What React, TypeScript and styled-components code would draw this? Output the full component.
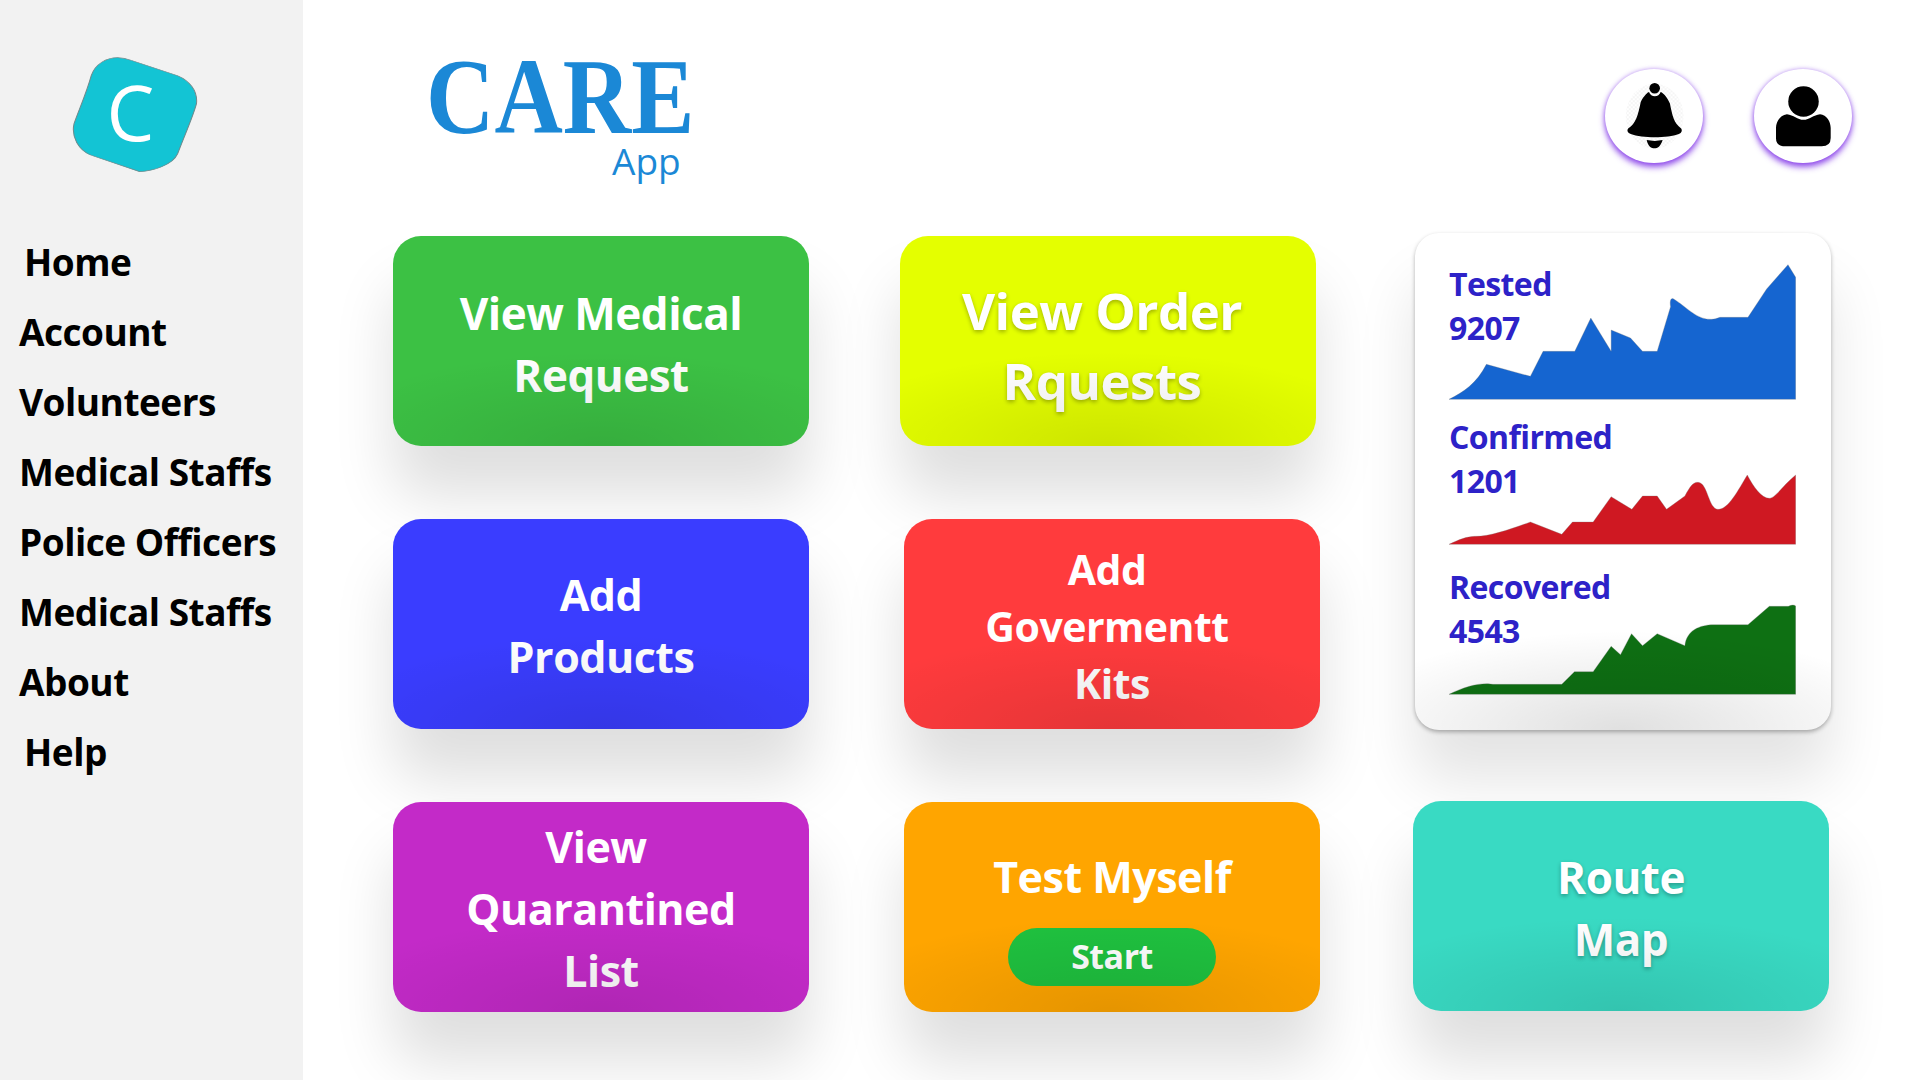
import React from 'react';
import styled, { createGlobalStyle } from 'styled-components';

const GlobalStyle = createGlobalStyle`
  html, body {
    margin: 0;
    padding: 0;
    background: #fff;
  }
  body {
    font-family: "Open Sans", "Noto Sans", sans-serif;
    overflow: hidden;
  }
`;

const Page = styled.div`
  display: flex;
  width: 1920px;
  height: 1080px;
  overflow: hidden;
`;

const Sidebar = styled.aside`
  flex: 0 0 303px;
  background: #f2f2f2;
  padding-top: 57px;
  box-sizing: border-box;
`;

const LogoMark = styled.div`
  display: grid;
  width: 127px;
  height: 116px;
  margin: 0 0 54px 71px;
  place-items: center;

  & > * {
    grid-area: 1 / 1;
  }
`;

const LogoLetter = styled.span`
  color: #fff;
  font-size: 76px;
  font-weight: 400;
  line-height: 1;
  margin: 0 8px 6px 0;
`;

const Nav = styled.nav`
  display: flex;
  flex-direction: column;
`;

const NavItem = styled.a<{ $indent?: boolean }>`
  height: 70px;
  line-height: 70px;
  padding-left: ${(p) => (p.$indent ? 24 : 19)}px;
  color: #000;
  font-size: 37px;
  font-weight: 700;
  letter-spacing: -0.5px;
  white-space: nowrap;
`;

const Main = styled.main`
  flex: 1;
  padding-left: 90px;
  min-width: 0;
`;

const Header = styled.header`
  display: flex;
  justify-content: space-between;
  height: 236px;
`;

const Brand = styled.div`
  margin-left: 33px;
  padding-top: 58px;
  color: #1b88d6;
`;

const BrandName = styled.div`
  font-family: "Liberation Serif", serif;
  font-size: 107px;
  font-weight: 700;
  line-height: 78px;
  transform: scaleX(0.885);
  transform-origin: left center;
  white-space: nowrap;
`;

const BrandSub = styled.div`
  margin-left: 186px;
  font-size: 37px;
  line-height: 50px;
`;

const HeaderActions = styled.div`
  display: flex;
  gap: 51px;
  padding: 69px 68px 0 0;
`;

const RoundButton = styled.div`
  display: flex;
  align-items: center;
  justify-content: center;
  width: 98px;
  height: 94px;
  border-radius: 50%;
  background: #fff;
  box-shadow: 0 4px 6px rgba(128, 50, 232, 0.85), 0 0 4px rgba(150, 90, 235, 0.5);
`;

const Board = styled.div`
  display: grid;
  grid-template-columns: repeat(3, 416px);
  grid-auto-rows: 210px;
  column-gap: 95px;
  row-gap: 73px;
`;

const Tile = styled.div<{
  $bg: string;
  $x?: number;
  $y?: number;
  $top?: number;
  $size?: number;
  $lh?: number;
  $glow?: boolean;
}>`
  position: relative;
  display: flex;
  flex-direction: column;
  align-items: center;
  justify-content: center;
  box-sizing: border-box;
  margin: ${(p) => p.$y ?? 0}px ${(p) => -(p.$x ?? 0)}px ${(p) => -(p.$y ?? 0)}px ${(p) => p.$x ?? 0}px;
  padding-top: ${(p) => p.$top ?? 0}px;
  border-radius: 28px;
  background: ${(p) => p.$bg};
  color: #fff;
  font-size: ${(p) => p.$size ?? 43}px;
  font-weight: 700;
  letter-spacing: -0.5px;
  line-height: ${(p) => p.$lh ?? 62}px;
  text-align: center;
  text-shadow: ${(p) => (p.$glow ? '0 2px 4px rgba(0, 0, 0, 0.3)' : 'none')};
  box-shadow: 0 50px 60px rgba(0, 0, 0, 0.13);

  &::after {
    content: '';
    position: absolute;
    inset: 0;
    border-radius: inherit;
    background: radial-gradient(ellipse 70% 45% at 50% 100%, rgba(0, 0, 0, 0.1), rgba(0, 0, 0, 0));
    pointer-events: none;
  }
`;

const Line = styled.span<{ $shift?: number }>`
  display: block;
  white-space: nowrap;
  margin-right: ${(p) => p.$shift ?? 0}px;
`;

const StartPill = styled.div`
  width: 208px;
  height: 58px;
  margin-top: 20px;
  border-radius: 29px;
  background: #1fc13f;
  font-size: 34px;
  line-height: 56px;
`;

const StatsCard = styled.div`
  position: relative;
  grid-row: span 2;
  height: 497px;
  margin-top: -3px;
  padding: 31px 34px 0;
  box-sizing: border-box;
  border-radius: 24px;
  background: #fff;
  box-shadow: 0 2px 4px rgba(0, 0, 0, 0.3), 0 50px 60px rgba(0, 0, 0, 0.11);

  &::after {
    content: '';
    position: absolute;
    inset: 0;
    border-radius: inherit;
    background: radial-gradient(ellipse 70% 20% at 50% 100%, rgba(0, 0, 0, 0.12), rgba(0, 0, 0, 0));
    pointer-events: none;
  }
`;

const Stat = styled.div<{ $h: number; $gap: number }>`
  display: grid;
  height: ${(p) => p.$h}px;
  margin-bottom: ${(p) => p.$gap}px;

  & > * {
    grid-area: 1 / 1;
  }
`;

const StatText = styled.div`
  align-self: start;
  margin-top: -2px;
  color: #2d22c8;
  font-size: 32px;
  font-weight: 700;
  letter-spacing: -0.6px;
  line-height: 44px;
`;

const Chart = styled.svg`
  display: block;
  align-self: end;
`;

const BLOB =
  'M232 172 Q245 172 258 180 L350 226 C372 240 390 270 387 310 C380 350 365 400 350 460 C340 495 300 512 275 514 L180 465 C155 450 140 410 146 370 C155 330 170 280 180 225 C188 190 210 172 232 172 Z';

const charts = {
  tested: {
    color: '#1565d0',
    box: '148 130 1040 407',
    h: 135.7,
    d: 'M148 536 C190 515 230 490 260 431 L392 467 L430 392 L525 392 L573 292 L634 392 L634 328 L692 352 L728 392 L772 392 L812 258 Q808 232 820 234 C860 258 890 298 935 296 Q945 296 960 290 L1044 290 L1100 205 L1164 132 L1187 170 L1187 536 Z',
  },
  confirmed: {
    color: '#cf1822',
    box: '148 -18 1040 212',
    h: 70.7,
    d: 'M148 193 C180 178 200 170 225 169 C270 170 330 148 392 126 L486 163 L518 126 L580 126 L634 50 L696 88 L728 48 L772 48 L800 88 L855 48 C870 20 880 5 895 7 C925 10 925 88 955 88 C985 88 1015 30 1042 -15 C1060 20 1085 55 1108 55 C1125 55 1150 15 1187 -15 L1187 193 Z',
  },
  recovered: {
    color: '#0e7013',
    box: '148 372 1040 272',
    h: 90.7,
    d: 'M148 643 C190 622 230 610 265 611 L280 613 L486 613 L524 575 L580 575 L634 499 L662 524 L695 461 L728 497 L772 461 L855 497 C860 450 900 435 940 434 L1044 434 L1108 379 L1165 379 Q1180 372 1187 378 L1187 643 Z',
  },
};

const AreaChart = ({ data }: { data: { color: string; box: string; h: number; d: string } }) => (
  <Chart width={347} height={data.h} viewBox={data.box} preserveAspectRatio="none">
    <path d={data.d} fill={data.color} stroke="#7a7a7a" strokeWidth="1.5" strokeOpacity="0.6" />
  </Chart>
);

const BellIcon = () => (
  <svg width="60" height="68" viewBox="190 125 180 205">
    <defs>
      <pattern id="checks" width="12" height="12" patternUnits="userSpaceOnUse">
        <rect width="6" height="6" fill="#eaeaea" />
        <rect x="6" y="6" width="6" height="6" fill="#eaeaea" />
      </pattern>
    </defs>
    <ellipse cx="282" cy="228" rx="87" ry="98" fill="url(#checks)" opacity="0.5" />
    <circle cx="282" cy="144" r="16" fill="#000" />
    <path
      d="M240 185 C250 165 262 155 265 155 C270 172 295 172 300 155 C305 155 320 170 328 190 C335 225 340 250 362 265 Q368 275 355 282 C320 295 245 295 210 282 Q195 275 202 265 C225 250 232 225 240 185 Z"
      fill="#000"
    />
    <path d="M258 300 Q282 305 306 300 C300 320 290 325 282 325 C272 325 262 320 258 300 Z" fill="#000" />
  </svg>
);

const UserIcon = () => (
  <svg width="57" height="63" viewBox="645 135 170 190">
    <circle cx="730" cy="185" r="46" fill="#000" />
    <path
      d="M680 223 C700 225 712 240 730 240 C748 240 760 225 780 223 C800 225 812 245 812 265 L812 295 Q812 320 785 320 L675 320 Q647 320 647 295 L647 265 C647 245 660 225 680 223 Z"
      fill="#000"
    />
  </svg>
);

const navItems = [
  { label: 'Home', indent: true },
  { label: 'Account' },
  { label: 'Volunteers' },
  { label: 'Medical Staffs' },
  { label: 'Police Officers' },
  { label: 'Medical Staffs' },
  { label: 'About' },
  { label: 'Help', indent: true },
];

const App = () => {
  return (
    <Page>
      <GlobalStyle />
      <Sidebar>
        <LogoMark>
          <svg width="127" height="116" viewBox="140 170 250 348" preserveAspectRatio="none">
            <path d={BLOB} fill="#13c4d4" stroke="#6f8a8c" strokeWidth="2" />
          </svg>
          <LogoLetter>C</LogoLetter>
        </LogoMark>
        <Nav>
          {navItems.map((item, i) => (
            <NavItem key={i} $indent={item.indent}>
              {item.label}
            </NavItem>
          ))}
        </Nav>
      </Sidebar>
      <Main>
        <Header>
          <Brand>
            <BrandName>CARE</BrandName>
            <BrandSub>App</BrandSub>
          </Brand>
          <HeaderActions>
            <RoundButton>
              <BellIcon />
            </RoundButton>
            <RoundButton>
              <UserIcon />
            </RoundButton>
          </HeaderActions>
        </Header>
        <Board>
          <Tile $bg="#3cc144" $size={44} $top={5}>
            <Line>View Medical</Line>
            <Line>Request</Line>
          </Tile>
          <Tile $bg="#e4ff00" $x={-4} $size={51} $lh={70} $top={8} $glow>
            <Line $shift={12}>View Order</Line>
            <Line $shift={12}>Rquests</Line>
          </Tile>
          <StatsCard>
            <Stat $h={134} $gap={19}>
              <StatText>
                Tested
                <br />
                9207
              </StatText>
              <AreaChart data={charts.tested} />
            </Stat>
            <Stat $h={128} $gap={22}>
              <StatText>
                Confirmed
                <br />
                1201
              </StatText>
              <AreaChart data={charts.confirmed} />
            </Stat>
            <Stat $h={128} $gap={0}>
              <StatText>
                Recovered
                <br />
                4543
              </StatText>
              <AreaChart data={charts.recovered} />
            </Stat>
          </StatsCard>
          <Tile $bg="#3a3dff" $top={4}>
            <Line>Add</Line>
            <Line>Products</Line>
          </Tile>
          <Tile $bg="#ff3b3d" $size={41} $lh={57} $top={5}>
            <Line $shift={10}>Add</Line>
            <Line $shift={10}>Govermentt</Line>
            <Line>Kits</Line>
          </Tile>
          <Tile $bg="#c32ac8" $top={4}>
            <Line $shift={10}>View</Line>
            <Line>Quarantined</Line>
            <Line>List</Line>
          </Tile>
          <Tile $bg="#ffa500" $top={18}>
            <Line>Test Myself</Line>
            <StartPill>Start</StartPill>
          </Tile>
          <Tile $bg="#39dac3" $x={-2} $y={-1} $size={44} $top={3} $glow>
            <Line>Route</Line>
            <Line>Map</Line>
          </Tile>
        </Board>
      </Main>
    </Page>
  );
};

export default App;
